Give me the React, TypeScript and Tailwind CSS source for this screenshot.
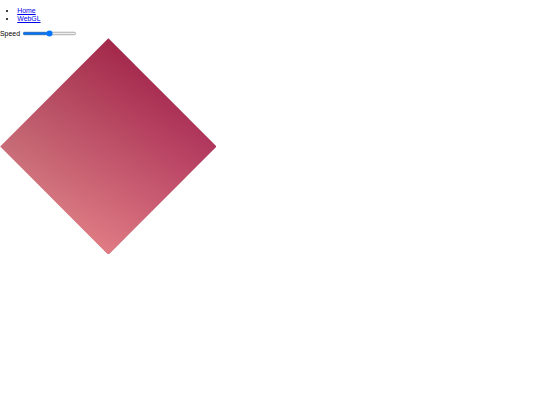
import { useState } from "react";

const links = [
  { label: "Home", href: "#" },
  { label: "WebGL", href: "#webgl" },
];

// the original page is an unstyled document shown at ~43% size
const App = () => {
  const [speed, setSpeed] = useState(50);

  return (
    <div className="[zoom:0.432] font-['Liberation_Sans',Arial,sans-serif] text-base text-black bg-white">
      <ul className="list-disc pl-10 my-4 leading-[1.15]">
        {links.map((link) => (
          <li key={link.label}>
            <a href={link.href} className="text-[#0000ee] underline">
              {link.label}
            </a>
          </li>
        ))}
      </ul>
      <div className="flex items-center h-[19px]">
        <label htmlFor="speed">Speed</label>
        <input
          id="speed"
          type="range"
          min={0}
          max={100}
          value={speed}
          onChange={(e) => setSpeed(Number(e.target.value))}
          className="ml-[4px] w-[129px] h-4"
        />
      </div>
      {/* stands in for the webgl canvas: a quad with per-vertex colours */}
      <div className="w-[500px] h-[500px] flex items-center justify-center overflow-hidden">
        <div className="relative w-[353.6px] h-[353.6px] rotate-45 bg-[linear-gradient(to_bottom,#a3284a,#c86e78)]">
          <div className="absolute inset-0 bg-[linear-gradient(to_bottom,#b0385e,#e07c84)] [mask-image:linear-gradient(to_right,transparent,black)]" />
        </div>
      </div>
    </div>
  );
};

export default App;
